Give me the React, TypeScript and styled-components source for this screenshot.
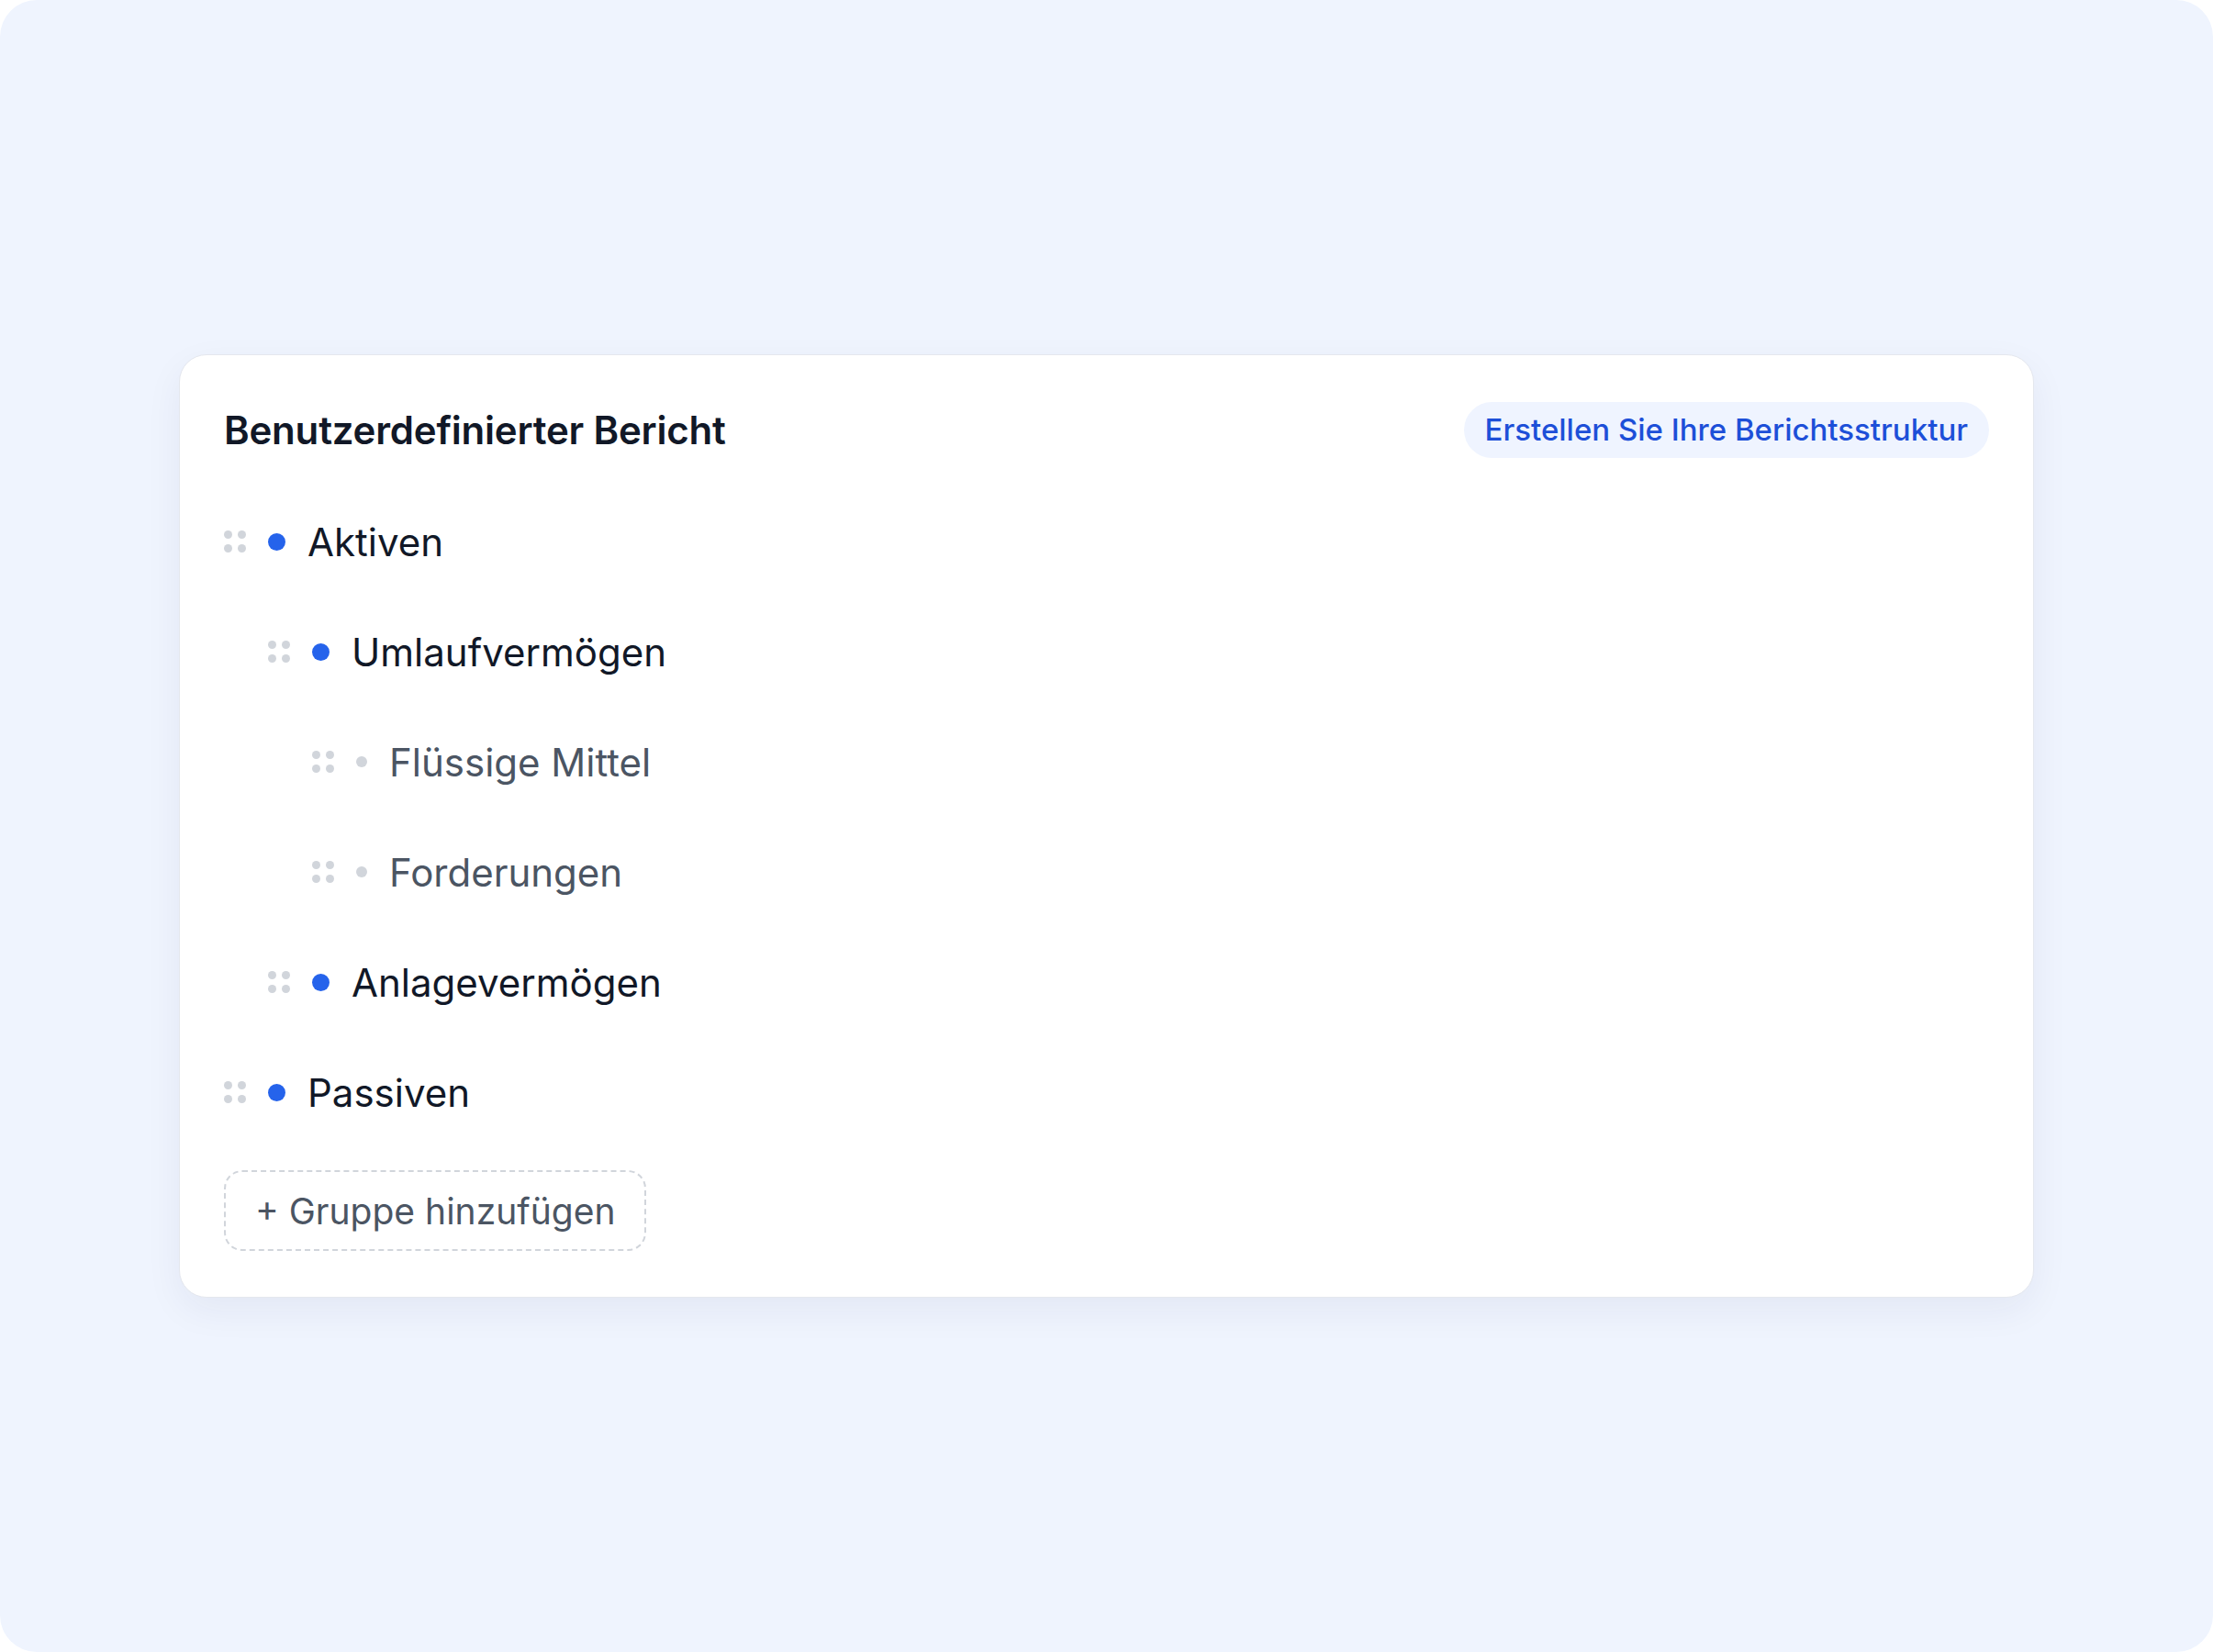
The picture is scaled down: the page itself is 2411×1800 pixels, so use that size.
import React from "react"
import styled, { createGlobalStyle } from "styled-components"

const GlobalStyle = createGlobalStyle`
    html, body {
        margin: 0;
        padding: 0;
        background: #ffffff;
    }

    * {
        box-sizing: border-box;
    }
`

interface ReportNode {
    id: string
    label: string
    children?: ReportNode[]
}

const reportTree: ReportNode[] = [
    {
        id: "aktiven",
        label: "Aktiven",
        children: [
            {
                id: "umlauf",
                label: "Umlaufvermögen",
                children: [
                    { id: "fluessig", label: "Flüssige Mittel" },
                    { id: "forderungen", label: "Forderungen" },
                ],
            },
            { id: "anlage", label: "Anlagevermögen" },
        ],
    },
    { id: "passiven", label: "Passiven" },
]

const Page = styled.main`
    width: 100%;
    height: 100vh;

    background-color: #eff4fe;
    border-radius: 40px;

    display: flex;
    align-items: center;
    justify-content: center;

    font-family: Inter, "Noto Sans", sans-serif;
`

const Card = styled.section`
    width: 2021px;
    height: 1028px;

    padding: 50px 48px 48px;

    background-color: #ffffff;
    border: 1px solid #e4e7ee;
    border-radius: 30px;
    box-shadow: 0 14px 40px rgba(30, 41, 80, 0.06);

    display: flex;
    flex-direction: column;
`

const Header = styled.header`
    height: 62px;

    display: flex;
    align-items: center;
    justify-content: space-between;
`

const Title = styled.h2`
    margin: 0;

    font-size: 42px;
    font-weight: 600;
    letter-spacing: -0.2px;
    color: #111827;
`

const Hint = styled.span`
    height: 61px;
    padding: 0 23px;

    display: flex;
    align-items: center;

    background-color: #eff4ff;
    border-radius: 999px;

    font-size: 33px;
    font-weight: 500;
    color: #1d4fd8;
`

const TreeList = styled.ul`
    margin: 55px 0 49px;
    padding: 0;
    list-style: none;

    display: flex;
    flex-direction: column;
    gap: 48px;
`

const Row = styled.li<{ $depth: number }>`
    height: 72px;
    padding-left: ${(p) => p.$depth * 48}px;

    display: flex;
    align-items: center;
    gap: 24px;
`

const Handle = styled.span`
    width: 24px;
    height: 24px;
    flex-shrink: 0;

    display: grid;
    grid-template-columns: 9px 9px;
    grid-template-rows: 9px 9px;
    justify-content: space-between;
    align-content: space-between;

    cursor: grab;

    & > i {
        display: block;
        border-radius: 50%;
        background-color: #d1d5db;
    }
`

const Bullet = styled.span<{ $leaf: boolean }>`
    width: ${(p) => (p.$leaf ? 12 : 19)}px;
    height: ${(p) => (p.$leaf ? 12 : 19)}px;
    flex-shrink: 0;

    border-radius: 50%;
    background-color: ${(p) => (p.$leaf ? "#d1d5db" : "#2563eb")};
`

const Label = styled.span<{ $leaf: boolean }>`
    font-size: 42px;
    font-weight: 400;
    color: ${(p) => (p.$leaf ? "#4b5563" : "#111827")};
`

const AddButton = styled.button`
    align-self: flex-start;
    height: 88px;
    padding: 0 32px;

    background: transparent;
    border: 2px dashed #d1d5db;
    border-radius: 20px;

    font-family: inherit;
    font-size: 39px;
    font-weight: 400;
    color: #4b5563;

    cursor: pointer;
`

function flatten(nodes: ReportNode[], depth = 0): { node: ReportNode; depth: number }[] {
    return nodes.flatMap((node) => [
        { node, depth },
        ...flatten(node.children ?? [], depth + 1),
    ])
}

function TreeRow({ node, depth }: { node: ReportNode; depth: number }) {
    // level 2 entries are the accounts, drawn lighter
    const leaf = depth >= 2

    return (
        <Row $depth={depth}>
            <Handle>
                <i />
                <i />
                <i />
                <i />
            </Handle>
            <Bullet $leaf={leaf} />
            <Label $leaf={leaf}>{node.label}</Label>
        </Row>
    )
}

export default function App() {
    return (
        <>
            <GlobalStyle />
            <Page>
                <Card>
                    <Header>
                        <Title>Benutzerdefinierter Bericht</Title>
                        <Hint>Erstellen Sie Ihre Berichtsstruktur</Hint>
                    </Header>
                    <TreeList>
                        {flatten(reportTree).map(({ node, depth }) => (
                            <TreeRow key={node.id} node={node} depth={depth} />
                        ))}
                    </TreeList>
                    <AddButton>+ Gruppe hinzufügen</AddButton>
                </Card>
            </Page>
        </>
    )
}
